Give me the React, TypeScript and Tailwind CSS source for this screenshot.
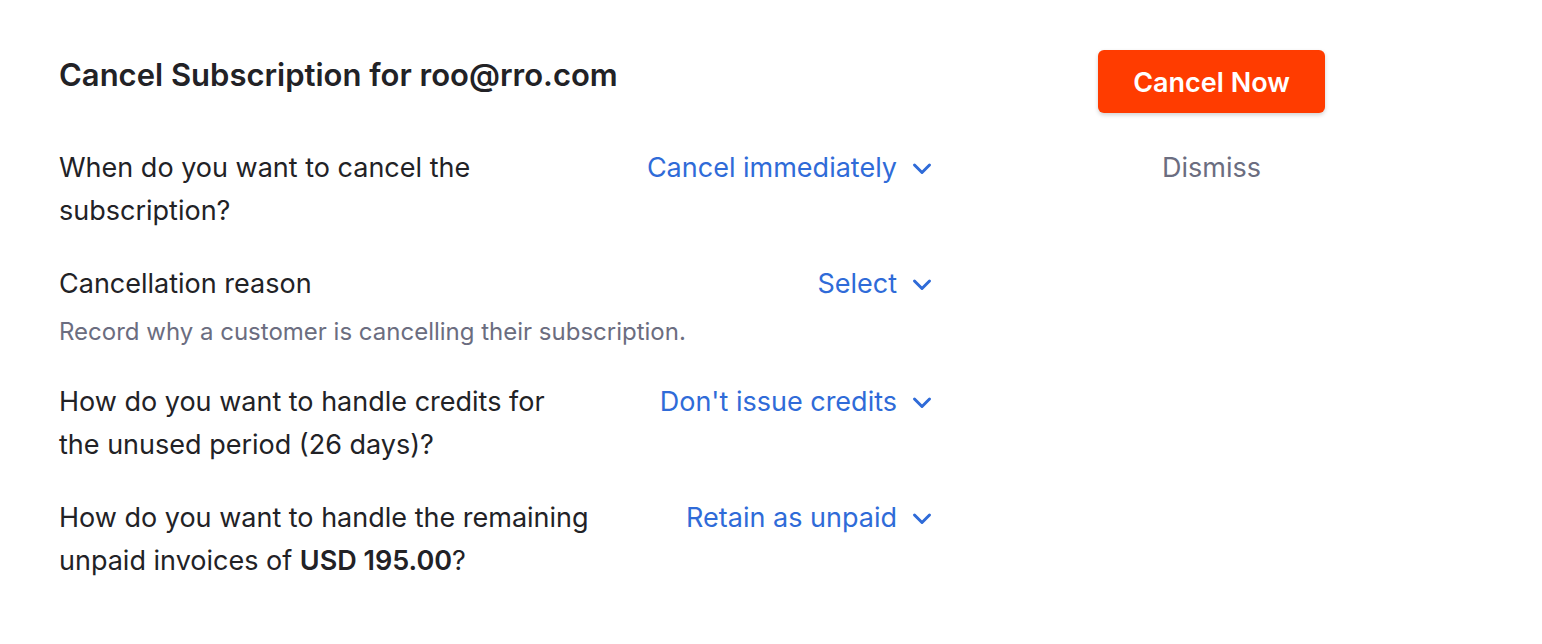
import React from 'react';

const Chevron = () => (
  <svg className="ml-[14px] h-[22px] w-[22px]" viewBox="0 0 22 22" fill="none">
    <path d="M3.5 8L11 15.5L18.5 8" stroke="currentColor" strokeWidth="3" strokeLinecap="round" strokeLinejoin="round" />
  </svg>
);

const Dropdown = ({ label }: { label: string }) => (
  <button className="flex shrink-0 items-center text-[27px] leading-[43px] text-[#2f6bd8]">
    {label}
    <Chevron />
  </button>
);

export default function App() {
  return (
    <div className="flex min-h-[644px] bg-white pl-[59px] pt-[50px] font-['Inter',sans-serif] text-[#222226]">
      <div className="w-[874px]">
        <h2 className="mt-[6px] text-[31px] font-semibold leading-[38px]">Cancel Subscription for roo@rro.com</h2>

        <div className="mt-[52px] flex items-start justify-between text-[27px] leading-[43px]">
          <p>When do you want to cancel the<br />subscription?</p>
          <Dropdown label="Cancel immediately" />
        </div>

        <div className="mt-[30px]">
          <div className="flex items-start justify-between text-[27px] leading-[43px]">
            <p>Cancellation reason</p>
            <Dropdown label="Select" />
          </div>
          <p className="mt-[11px] text-[24px] leading-[32px] text-[#6b6d80]">Record why a customer is cancelling their subscription.</p>
        </div>

        <div className="mt-[32px] flex items-start justify-between text-[27px] leading-[43px]">
          <p>How do you want to handle credits for<br />the unused period (26 days)?</p>
          <Dropdown label="Don't issue credits" />
        </div>

        <div className="mt-[30px] flex items-start justify-between text-[27px] leading-[43px]">
          <p>How do you want to handle the remaining<br />unpaid invoices of <span className="font-semibold">USD 195.00</span>?</p>
          <Dropdown label="Retain as unpaid" />
        </div>
      </div>

      <div className="ml-[165px] flex w-[227px] flex-col items-center">
        <button className="h-[63px] w-full rounded-[6px] bg-[#ff3c00] pt-[3px] text-[27px] font-semibold text-white shadow-[0_2px_4px_rgba(0,0,0,0.18)]">Cancel Now</button>
        <button className="mt-[34px] text-[27px] leading-[42px] text-[#6b6d80]">Dismiss</button>
      </div>
    </div>
  );
}
